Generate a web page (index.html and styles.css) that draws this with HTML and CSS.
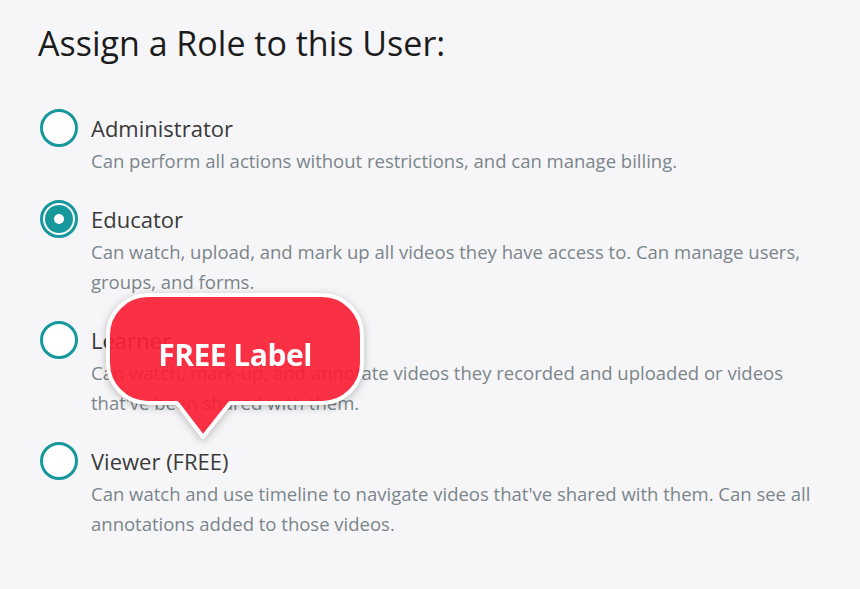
FILE: index.html
```html
<!DOCTYPE html>
<html lang="en">
<head>
    <meta charset="UTF-8">
    <title>Assign a Role</title>
    <link rel="stylesheet" href="styles.css">
</head>
<body>
    <div class="page">
        <h1 class="title">Assign a Role to this User:</h1>
        <div class="roles">
            <div class="role">
                <span class="radio"></span>
                <div class="info">
                    <div class="name">Administrator</div>
                    <div class="desc">Can perform all actions without restrictions, and can manage billing.</div>
                </div>
            </div>
            <div class="role">
                <span class="radio checked"></span>
                <div class="info">
                    <div class="name">Educator</div>
                    <div class="desc">Can watch, upload, and mark up all videos they have access to. Can manage users, groups, and forms.</div>
                </div>
            </div>
            <div class="role">
                <span class="radio"></span>
                <div class="info">
                    <div class="name">Learner</div>
                    <div class="desc">Can watch, mark-up, and annotate videos they recorded and uploaded or videos that've been shared with them.</div>
                </div>
            </div>
            <div class="role">
                <span class="radio"></span>
                <div class="info">
                    <div class="name">Viewer (FREE)</div>
                    <div class="desc">Can watch and use timeline to navigate videos that've shared with them. Can see all annotations added to those videos.</div>
                </div>
            </div>
        </div>
        <div class="bubble">
            <svg width="264" height="152" viewBox="0 0 264 152">
                <path d="M44,4 H218 A40,40 0 0 1 258,44 V72 A40,40 0 0 1 218,112 H126 L99,146 L73,112 H44 A40,40 0 0 1 4,72 V44 A40,40 0 0 1 44,4 Z"
                      fill="#ff1f35" fill-opacity="0.9" stroke="#fff" stroke-width="4" stroke-linejoin="round"/>
            </svg>
            <span class="bubble-text">FREE Label</span>
        </div>
    </div>
</body>
</html>
```

FILE: styles.css
```css
*{
    margin: 0;
    padding: 0;
    box-sizing: border-box;
}
body{
    background: #f6f6f8;
    font-family: "Open Sans", sans-serif;
}
.page{
    position: relative;
    width: 860px;
    height: 589px;
    padding: 22px 0 0 40px;
}
.title{
    font-size: 34px;
    font-weight: 400;
    line-height: 42px;
    color: #1c1c1c;
    margin: 0 0 46px -2px;
}
.roles{
    display: flex;
    flex-direction: column;
    gap: 25px;
}
.role{
    display: flex;
    align-items: flex-start;
}
.radio{
    flex: none;
    width: 38px;
    height: 38px;
    border: 3px solid #17989c;
    border-radius: 50%;
    background: #fff;
    margin-top: -1px;
    position: relative;
}
.radio.checked::after{
    content: "";
    position: absolute;
    left: 2px;
    top: 2px;
    width: 28px;
    height: 28px;
    border-radius: 50%;
    background: #17989c;
}
.radio.checked::before{
    content: "";
    position: absolute;
    left: 11px;
    top: 11px;
    width: 10px;
    height: 10px;
    border-radius: 50%;
    background: #fff;
    z-index: 1;
}
.info{
    margin-left: 13px;
    width: 735px;
}
.name{
    font-size: 22px;
    line-height: 36px;
    color: #3a3a3a;
}
.desc{
    font-size: 18.5px;
    line-height: 30px;
    color: #7b858a;
}
.bubble{
    position: absolute;
    left: 104px;
    top: 291px;
    width: 264px;
    height: 152px;
    filter: drop-shadow(0 2px 4px rgba(0,0,0,0.25));
}
.bubble svg{
    display: block;
}
.bubble-text{
    position: absolute;
    left: 4px;
    top: 9px;
    width: 254px;
    height: 108px;
    display: flex;
    align-items: center;
    justify-content: center;
    color: #fff;
    font-size: 30px;
    font-weight: 700;
    letter-spacing: -0.5px;
}
```
